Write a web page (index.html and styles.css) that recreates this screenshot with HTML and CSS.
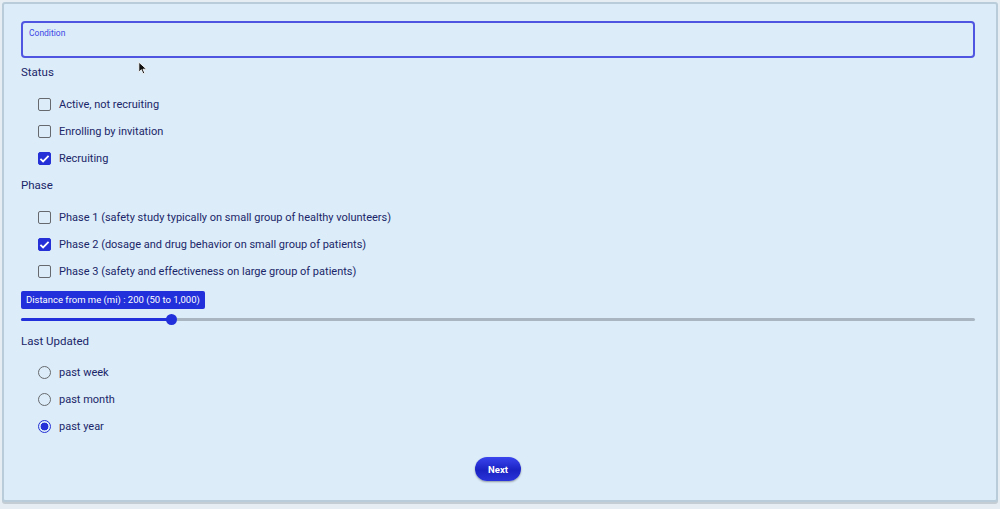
FILE: index.html
```html
<!DOCTYPE html>
<html lang="en">
<head>
    <meta charset="UTF-8">
    <meta name="viewport" content="width=device-width, initial-scale=1.0">
    <title>Trial Search</title>
    <link rel="stylesheet" href="styles.css">
</head>
<body>
    <div class="frame">
        <form class="search">
            <div class="field">
                <label class="field-label" for="condition">Condition</label>
                <input type="text" id="condition" class="field-input">
            </div>

            <div class="group-title">Status</div>
            <div class="options">
                <div class="option"><span class="box"></span>Active, not recruiting</div>
                <div class="option"><span class="box"></span>Enrolling by invitation</div>
                <div class="option"><span class="box checked"><svg viewBox="0 0 14 14"><path d="M2.6 7.3l2.9 2.9L11.4 4.2" /></svg></span>Recruiting</div>
            </div>

            <div class="group-title">Phase</div>
            <div class="options">
                <div class="option"><span class="box"></span>Phase 1 (safety study typically on small group of healthy volunteers)</div>
                <div class="option"><span class="box checked"><svg viewBox="0 0 14 14"><path d="M2.6 7.3l2.9 2.9L11.4 4.2" /></svg></span>Phase 2 (dosage and drug behavior on small group of patients)</div>
                <div class="option"><span class="box"></span>Phase 3 (safety and effectiveness on large group of patients)</div>
            </div>

            <div class="slider">
                <div class="slider-badge">Distance from me (mi) : 200 (50 to 1,000)</div>
                <div class="slider-track">
                    <div class="slider-fill" style="width: 15.8%"></div>
                    <div class="slider-thumb" style="left: 15.8%"></div>
                </div>
            </div>

            <div class="group-title">Last Updated</div>
            <div class="options">
                <div class="option"><span class="radio"></span>past week</div>
                <div class="option"><span class="radio"></span>past month</div>
                <div class="option"><span class="radio checked"></span>past year</div>
            </div>

            <div class="actions">
                <button type="button" class="next">Next</button>
            </div>
        </form>

        <svg class="cursor" viewBox="0 0 12 16" width="10" height="14">
            <path d="M1 1v12l3-3 2 5 2-1-2-4.6h4.2z" fill="#111" stroke="#fff" stroke-width="1" />
        </svg>
    </div>
</body>
</html>
```

FILE: styles.css
```css
body {
    margin: 0;
    background-color: #e6eef3;
    font-family: Roboto, "Liberation Sans", sans-serif;
    color: #1a2669;
}
.frame {
    position: relative;
    margin: 2px;
    height: 496px;
    background-color: #dcecf8;
    border: 2px solid #b8ccd9;
    border-radius: 3px;
    box-shadow: 0 2px 0 #c4cdd3;
}
.search {
    display: flex;
    flex-direction: column;
    padding: 17px 21px 0 17px;
}
.field {
    position: relative;
    height: 37px;
    box-sizing: border-box;
    border: 2px solid #4f55e0;
    border-radius: 4px;
}
.field-label {
    position: absolute;
    top: 5px;
    left: 6px;
    font-size: 8.5px;
    color: #4047e6;
}
.field-input {
    width: 100%;
    height: 100%;
    box-sizing: border-box;
    border: none;
    background: transparent;
    outline: none;
}
.group-title {
    font-size: 11.5px;
    line-height: 14px;
    margin-top: 7px;
}
.options + .group-title {
    margin-top: 6.5px;
}
.options {
    display: flex;
    flex-direction: column;
    margin-top: 11.5px;
    padding-left: 17px;
}
.option {
    display: flex;
    align-items: center;
    height: 27px;
    font-size: 11px;
    gap: 8px;
}
.box {
    display: inline-flex;
    align-items: center;
    justify-content: center;
    width: 13px;
    height: 13px;
    box-sizing: border-box;
    border: 1.5px solid #666a6e;
    border-radius: 2px;
}
.box.checked {
    background-color: #2531d6;
    border-color: #2531d6;
}
.box svg {
    width: 13px;
    height: 13px;
    flex: none;
    fill: none;
    stroke: #fff;
    stroke-width: 1.9;
}
.radio {
    width: 13px;
    height: 13px;
    box-sizing: border-box;
    border: 1.5px solid #666a6e;
    border-radius: 50%;
}
.radio.checked {
    border-color: #2531d6;
    background: radial-gradient(circle, #2531d6 0 3.6px, transparent 4.2px);
}
.slider {
    margin-top: 6.5px;
}
.slider-badge {
    width: fit-content;
    height: 18px;
    line-height: 18px;
    padding: 0 5px;
    font-size: 9.5px;
    color: #fff;
    background-color: #2130da;
    border-radius: 2px;
}
.slider-track {
    position: relative;
    height: 3px;
    margin: 8.5px 0;
    background-color: #a9b6c2;
    border-radius: 2px;
}
.slider-fill {
    height: 100%;
    background-color: #2130da;
    border-radius: 2px;
}
.slider-thumb {
    position: absolute;
    top: -4px;
    width: 11px;
    height: 11px;
    margin-left: -5.5px;
    background-color: #2130da;
    border-radius: 50%;
}
.slider + .group-title {
    margin-top: 4.5px;
}
.actions {
    display: flex;
    justify-content: center;
    margin-top: 17px;
}
.next {
    width: 46px;
    height: 24px;
    padding: 0;
    border: none;
    border-radius: 12px;
    font-family: inherit;
    font-size: 9.5px;
    font-weight: bold;
    color: #fff;
    background: linear-gradient(#3a45ee, #1a22c2 55%, #2a34d8);
    box-shadow: 0 1px 2px rgba(0, 0, 0, 0.35);
}
.cursor {
    position: absolute;
    left: 134px;
    top: 57px;
}
```
